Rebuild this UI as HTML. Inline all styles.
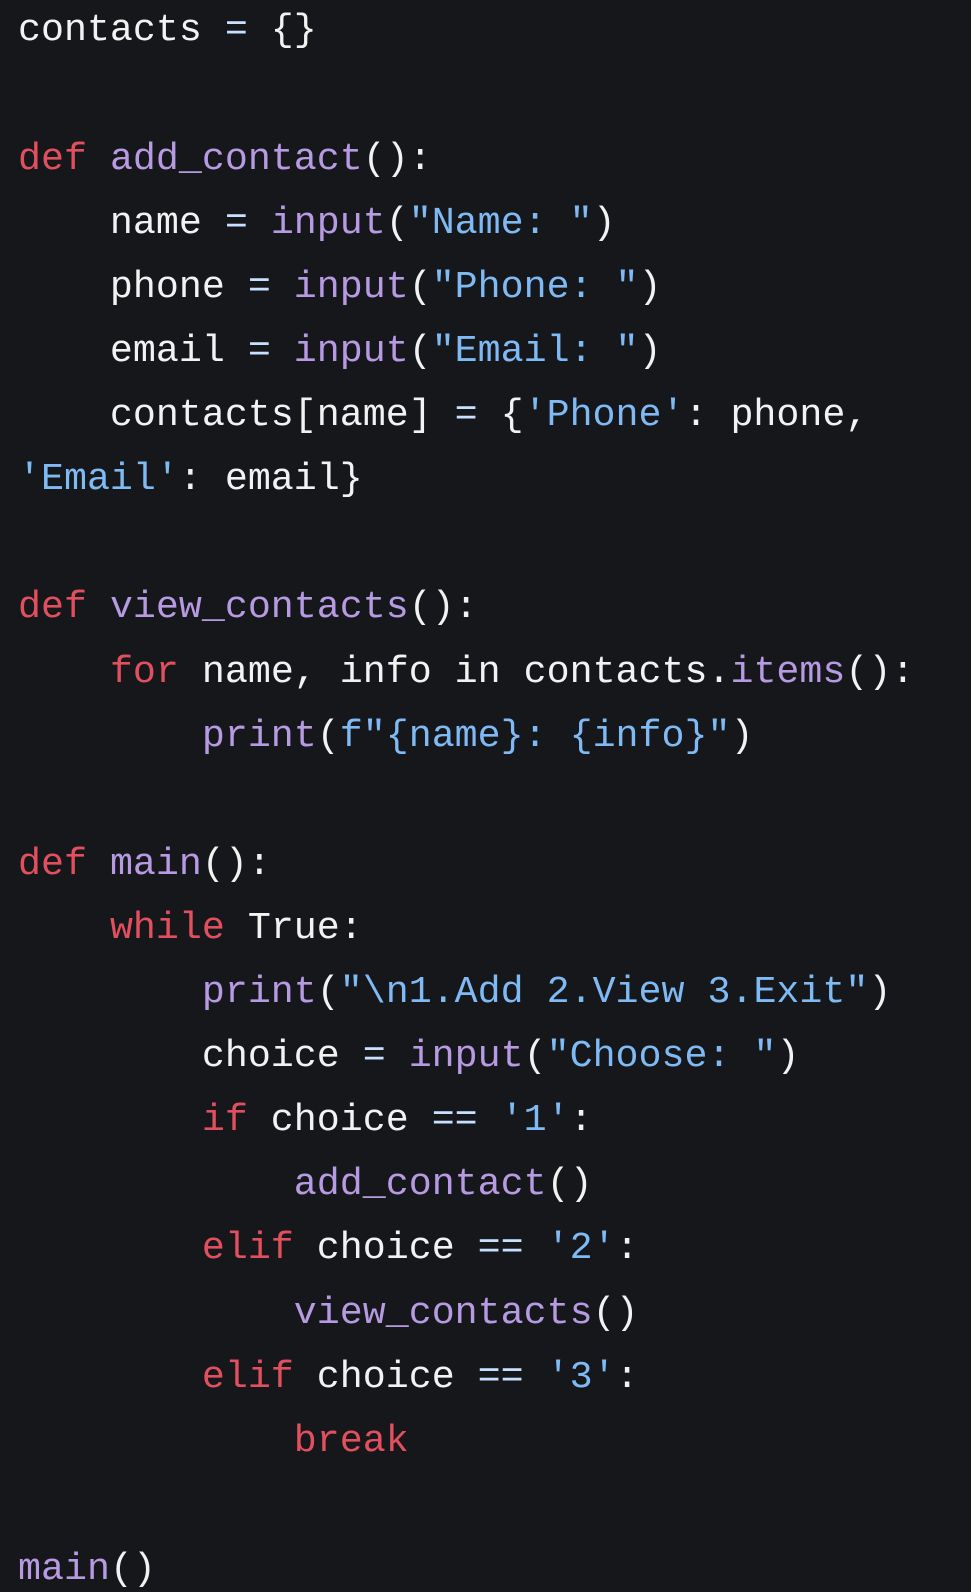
<!DOCTYPE html>
<html><head><meta charset="utf-8"><style>
html,body{margin:0;padding:0;background:#16171b;width:971px;height:1592px;overflow:hidden;position:relative}
.l{position:absolute;left:18px;height:64px;line-height:64px;white-space:pre;font-family:"Liberation Mono",monospace;font-size:38.3px;color:#f2f2f2}
.k{color:#e2505f}.f{color:#b69ae2}.s{color:#7fbaf5}.o{color:#c8e0ff}
</style></head><body>
<div class="l" style="top:-2px">contacts <span class="o">=</span> {}</div>
<div class="l" style="top:127px"><span class="k">def</span> <span class="f">add_contact</span>():</div>
<div class="l" style="top:191px">    name <span class="o">=</span> <span class="f">input</span>(<span class="s">"Name: "</span>)</div>
<div class="l" style="top:255px">    phone <span class="o">=</span> <span class="f">input</span>(<span class="s">"Phone: "</span>)</div>
<div class="l" style="top:319px">    email <span class="o">=</span> <span class="f">input</span>(<span class="s">"Email: "</span>)</div>
<div class="l" style="top:383px">    contacts[name] <span class="o">=</span> {<span class="s">'Phone'</span>: phone,</div>
<div class="l" style="top:447px"><span class="s">'Email'</span>: email}</div>
<div class="l" style="top:575px"><span class="k">def</span> <span class="f">view_contacts</span>():</div>
<div class="l" style="top:640px">    <span class="k">for</span> name, info in contacts.<span class="f">items</span>():</div>
<div class="l" style="top:704px">        <span class="f">print</span>(<span class="s">f"{name}: {info}"</span>)</div>
<div class="l" style="top:832px"><span class="k">def</span> <span class="f">main</span>():</div>
<div class="l" style="top:896px">    <span class="k">while</span> True:</div>
<div class="l" style="top:960px">        <span class="f">print</span>(<span class="s">"\n1.Add 2.View 3.Exit"</span>)</div>
<div class="l" style="top:1024px">        choice <span class="o">=</span> <span class="f">input</span>(<span class="s">"Choose: "</span>)</div>
<div class="l" style="top:1088px">        <span class="k">if</span> choice <span class="o">==</span> <span class="s">'1'</span>:</div>
<div class="l" style="top:1152px">            <span class="f">add_contact</span>()</div>
<div class="l" style="top:1216px">        <span class="k">elif</span> choice <span class="o">==</span> <span class="s">'2'</span>:</div>
<div class="l" style="top:1281px">            <span class="f">view_contacts</span>()</div>
<div class="l" style="top:1345px">        <span class="k">elif</span> choice <span class="o">==</span> <span class="s">'3'</span>:</div>
<div class="l" style="top:1409px">            <span class="k">break</span></div>
<div class="l" style="top:1537px"><span class="f">main</span>()</div>
</body></html>
